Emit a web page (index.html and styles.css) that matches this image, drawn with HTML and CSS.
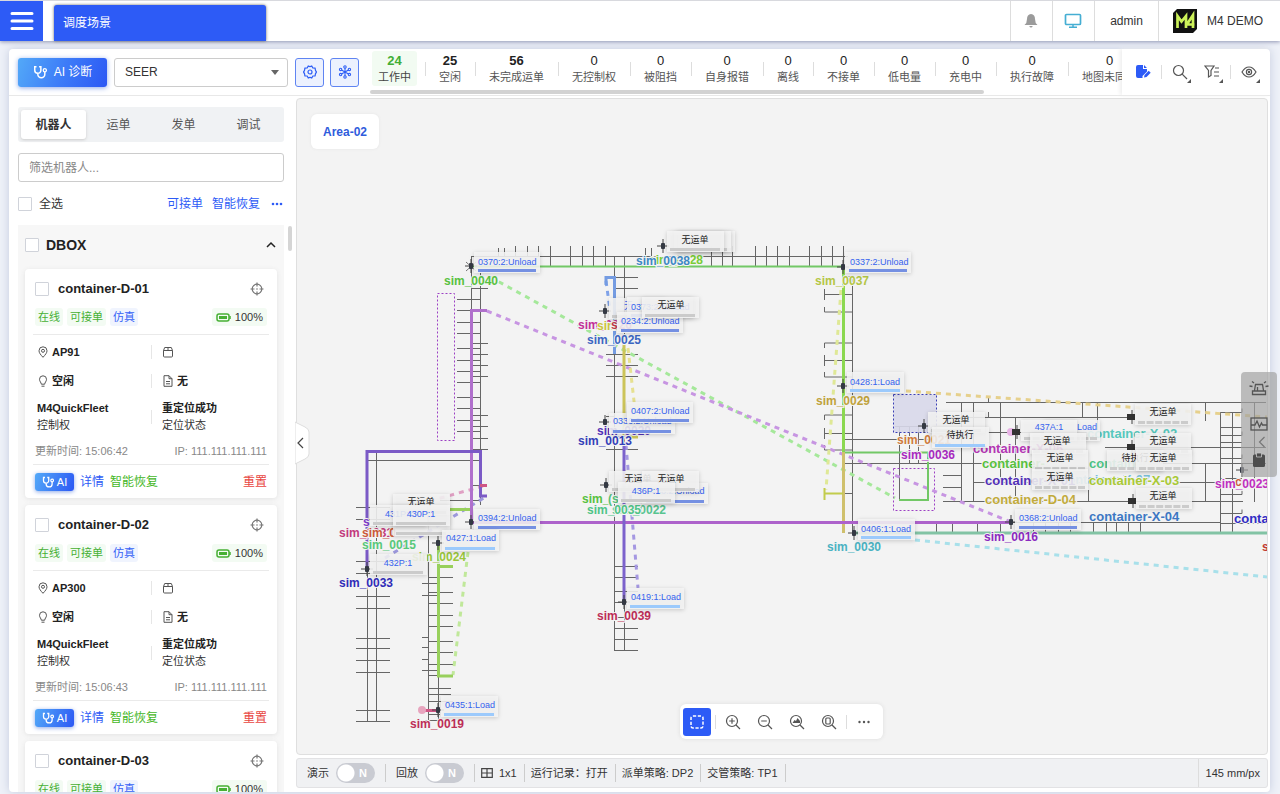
FILE: index.html
```html
<!DOCTYPE html>
<html lang="zh-CN">
<head>
<meta charset="utf-8">
<meta name="viewport" content="width=device-width, initial-scale=1">
<title>调度场景</title>
<link rel="stylesheet" href="styles.css">
</head>
<body>
<svg class="defs" aria-hidden="true">
  <symbol id="steth" viewBox="0 0 16 16"><path d="M4 2H2v4a3.500 3.500 0 0 0 7 0V2H7M5.500 9.500v1a4 4 0 0 0 8 0V8" fill="none" stroke="currentColor" stroke-width="1.700"/><circle cx="13.500" cy="6" r="1.800" fill="none" stroke="currentColor" stroke-width="1.500"/></symbol>
  <symbol id="aim" viewBox="0 0 14 14"><g fill="none" stroke="currentColor" stroke-width="1.200"><circle cx="7" cy="7" r="4.800"/><path d="M7 .5v4M7 9.500v4M.5 7h4M9.500 7h4"/></g><circle cx="7" cy="7" r=".8" fill="currentColor"/></symbol>
  <symbol id="battery" viewBox="0 0 15 9"><rect x="1" y="1" width="12" height="7" rx="2" fill="none" stroke="#47b034" stroke-width="1.500"/><rect x="3" y="3" width="8" height="3" fill="#47b034"/><path d="M14 3v3" stroke="#47b034" stroke-width="1.500"/></symbol>
  <symbol id="pin" viewBox="0 0 12 12"><g fill="none" stroke="currentColor"><path d="M6 11.300C3.600 8.700 2 6.800 2 4.800a4 4 0 0 1 8 0c0 2-1.600 3.900-4 6.500z"/><circle cx="6" cy="4.800" r="1.500"/></g></symbol>
  <symbol id="bulb" viewBox="0 0 12 12"><g fill="none" stroke="currentColor"><path d="M4.300 9.200C4.300 7.500 2.500 6.500 2.500 4.300a3.500 3.500 0 0 1 7 0C9.500 6.500 7.700 7.500 7.700 9.200zM4.500 11.200h3"/></g></symbol>
  <symbol id="box" viewBox="0 0 12 12"><g fill="none" stroke="currentColor"><path d="M1.500 4.500h9V10q0 1-1 1h-7q-1 0-1-1zM1.500 4.500l1.200-3h6.600l1.200 3M6 1.500v3"/></g></symbol>
  <symbol id="doc" viewBox="0 0 12 12"><g fill="none" stroke="currentColor"><path d="M2 .7h5l3 3v7.600H2zM7 .7v3h3M4 6.500h4M4 8.800h4"/></g></symbol>
  <symbol id="bot" viewBox="-7 -7 14 14"><path d="M-6 0H6M0-7V7" stroke="#444" stroke-width="1"/><rect x="-2" y="-3" width="4" height="6" rx="1" fill="#353a44"/></symbol>
  <symbol id="cart" viewBox="-7 -7 14 14"><path d="M1-7V7" stroke="#444" stroke-width="1"/><rect x="-4" y="-3" width="8" height="6" fill="#333"/></symbol>
  <g id="t-unload"><rect class="tag" width="66" height="21"/><rect x="4" y="17" width="58" height="3" fill="#7590e2"/></g>
  <g id="t-load"><rect class="tag" width="57" height="21"/><rect x="3" y="17" width="50" height="3" fill="#9ccafc"/></g>
  <g id="t-idle"><rect class="tag" width="57" height="21"/><rect x="3" y="17" width="50" height="3" fill="#cbcbcb"/></g>
  <g id="t-seg"><rect class="tag" width="56" height="21"/><path d="M3 18.500h50" stroke="#cbcbcb" stroke-width="3" stroke-dasharray="7 1.600"/></g>
</svg>

<header class="topbar">
  <button class="menu" aria-label="菜单"><svg width="24" height="22" viewBox="0 0 24 22"><path d="M2 3.500h20M2 11h20M2 18.500h20" stroke="#fff" stroke-width="3" stroke-linecap="round"/></svg></button>
  <a class="page-tab" href="#">调度场景</a>
  <div class="top-right">
    <button class="top-cell" aria-label="通知"><svg width="14" height="16" viewBox="0 0 14 16"><path d="M7 1q4 .5 4 5 0 4 2.500 6H.5Q3 10 3 6q0-4.500 4-5zM5.300 13h3.400q-.4 1.500-1.700 1.500T5.300 13z" fill="#9b9b9b"/></svg></button>
    <button class="top-cell" aria-label="屏幕"><svg width="18" height="16" viewBox="0 0 18 16"><rect x="1.500" y="1.500" width="15" height="10" rx="1" fill="none" stroke="#45aed3" stroke-width="1.700"/><path d="M9 12v2M5 14.300h8" stroke="#45aed3" stroke-width="1.500"/></svg></button>
    <span class="top-cell user">admin</span>
    <span class="top-cell brand"><svg width="26" height="26" viewBox="0 0 26 26"><path d="M5 1h20v20l-4 4H1V5z" fill="#111"/><path d="M5.500 20V8l4 5.500L14 8v12M14.500 17L21 7v13M14 16.500h8.500" fill="none" stroke="#cdf25a" stroke-width="2.700"/></svg>M4 DEMO</span>
  </div>
</header>

<main class="panel">
  <div class="toolbar">
    <button class="ai-btn"><svg width="14" height="14"><use href="#steth"/></svg>AI 诊断</button>
    <div class="select-wrap"><select class="select" aria-label="场景"><option>SEER</option></select></div>
    <button class="sq" aria-label="设置"><svg width="14" height="14" viewBox="0 0 14 14" fill="none" stroke="#2f5ff5" stroke-width="1.200"><path d="M5.200 1q1.800 1.200 3.600 0l1 2 2.400.2q-.2 2 1.300 3.800-1.500 1.800-1.300 3.800l-2.400.2-1 2q-1.800-1.200-3.600 0l-1-2-2.400-.2Q2 8.800.5 7 2 5.200 1.800 3.200L4.200 3z" stroke-linejoin="round"/><circle cx="7" cy="7" r="2"/></svg></button>
    <button class="sq" aria-label="节点"><svg width="14" height="14" viewBox="0 0 14 14" fill="none" stroke="#2f5ff5" stroke-width="1.100"><path d="M7 3v8M3.500 5L10.500 9M10.500 5L3.500 9"/><circle cx="7" cy="2" r="1.200"/><circle cx="7" cy="12" r="1.200"/><circle cx="2.600" cy="4.400" r="1.200"/><circle cx="11.400" cy="4.400" r="1.200"/><circle cx="2.600" cy="9.600" r="1.200"/><circle cx="11.400" cy="9.600" r="1.200"/></svg></button>
    <div class="stats">
      <div class="stat-row">
        <div class="stat on"><b>24</b><span>工作中</span></div>
        <div class="stat"><b>25</b><span>空闲</span></div>
        <div class="stat"><b>56</b><span>未完成运单</span></div>
        <div class="stat"><i>0</i><span>无控制权</span></div>
        <div class="stat"><i>0</i><span>被阻挡</span></div>
        <div class="stat"><i>0</i><span>自身报错</span></div>
        <div class="stat"><i>0</i><span>离线</span></div>
        <div class="stat"><i>0</i><span>不接单</span></div>
        <div class="stat"><i>0</i><span>低电量</span></div>
        <div class="stat"><i>0</i><span>充电中</span></div>
        <div class="stat"><i>0</i><span>执行故障</span></div>
        <div class="stat"><i>0</i><span>地图未同步</span></div>
      </div>
      <div class="hscroll"></div>
    </div>
    <div class="tools">
      <button class="tool" aria-label="编辑"><svg width="16" height="16" viewBox="0 0 16 16"><path d="M1 3q0-2 2-2h5v4h4v2.500L7.500 12v2H3q-2 0-2-2zM9 1l3 3H9z" fill="#2d5bf6"/><path d="M9 13.500l.5-2.500 4.200-4.200 2 2-4.200 4.200z" fill="#2d5bf6"/></svg></button>
      <span class="vsep"></span>
      <button class="tool more" aria-label="搜索"><svg width="16" height="16" viewBox="0 0 16 16" fill="none" stroke="#555" stroke-width="1.200"><circle cx="6.500" cy="6.500" r="5"/><path d="M10.200 10.200L15 15"/></svg></button>
      <button class="tool more" aria-label="筛选"><svg width="16" height="16" viewBox="0 0 16 16" fill="none" stroke="#555" stroke-width="1.200"><path d="M1 2h9L7 6.500v5L4.500 13V6.500zM11 4h4M10 8h5M10 12h5"/></svg></button>
      <span class="vsep"></span>
      <button class="tool more" aria-label="显示"><svg width="16" height="16" viewBox="0 0 16 16" fill="none" stroke="#555" stroke-width="1.200"><path d="M1 8q3-5 7-5t7 5q-3 5-7 5T1 8z"/><circle cx="8" cy="8" r="2.600"/><circle cx="8" cy="8" r=".6"/></svg></button>
    </div>
  </div>

  <div class="work">
    <aside class="side">
      <nav class="seg">
        <button class="seg-item cur">机器人</button><button class="seg-item">运单</button><button class="seg-item">发单</button><button class="seg-item">调试</button>
      </nav>
      <input class="filter" type="text" placeholder="筛选机器人..." aria-label="筛选机器人">
      <div class="all-row">
        <label class="chk-label"><input class="chk" type="checkbox">全选</label>
        <span class="links"><a href="#">可接单</a><a href="#">智能恢复</a><a class="dots" href="#" aria-label="更多"><svg width="12" height="4" viewBox="0 0 12 4" fill="#2d5bf6"><circle cx="2" cy="2" r="1.300"/><circle cx="6" cy="2" r="1.300"/><circle cx="10" cy="2" r="1.300"/></svg></a></span>
      </div>
      <div class="list">
        <section class="group">
          <div class="group-head"><label class="chk-label dbox"><input class="chk" type="checkbox">DBOX</label><svg width="12" height="8" viewBox="0 0 12 8"><path d="M2 6l4-4 4 4" fill="none" stroke="#222" stroke-width="1.500"/></svg></div>
          <article class="card">
            <div class="card-head"><label class="chk-label name"><input class="chk" type="checkbox">container-D-01</label><svg width="14" height="14"><use href="#aim"/></svg></div>
            <div class="chips"><span class="chip">在线</span><span class="chip">可接单</span><span class="chip sim">仿真</span><span class="chip bat"><svg width="15" height="9"><use href="#battery"/></svg>100%</span></div>
            <div class="cells">
              <div class="cell"><svg width="12" height="12"><use href="#pin"/></svg>AP91</div><div class="cell"><svg width="12" height="12"><use href="#box"/></svg></div>
              <div class="cell"><svg width="12" height="12"><use href="#bulb"/></svg>空闲</div><div class="cell"><svg width="12" height="12"><use href="#doc"/></svg>无</div>
              <div class="cell two">M4QuickFleet<span>控制权</span></div><div class="cell two">重定位成功<span>定位状态</span></div>
            </div>
            <div class="meta"><span>更新时间: 15:06:42</span><span>IP: 111.111.111.111</span></div>
            <div class="card-foot"><button class="ai-mini"><svg width="12" height="12"><use href="#steth"/></svg>AI</button><a href="#">详情</a><a class="ok" href="#">智能恢复</a><a class="bad" href="#">重置</a></div>
          </article>
          <article class="card">
            <div class="card-head"><label class="chk-label name"><input class="chk" type="checkbox">container-D-02</label><svg width="14" height="14"><use href="#aim"/></svg></div>
            <div class="chips"><span class="chip">在线</span><span class="chip">可接单</span><span class="chip sim">仿真</span><span class="chip bat"><svg width="15" height="9"><use href="#battery"/></svg>100%</span></div>
            <div class="cells">
              <div class="cell"><svg width="12" height="12"><use href="#pin"/></svg>AP300</div><div class="cell"><svg width="12" height="12"><use href="#box"/></svg></div>
              <div class="cell"><svg width="12" height="12"><use href="#bulb"/></svg>空闲</div><div class="cell"><svg width="12" height="12"><use href="#doc"/></svg>无</div>
              <div class="cell two">M4QuickFleet<span>控制权</span></div><div class="cell two">重定位成功<span>定位状态</span></div>
            </div>
            <div class="meta"><span>更新时间: 15:06:43</span><span>IP: 111.111.111.111</span></div>
            <div class="card-foot"><button class="ai-mini"><svg width="12" height="12"><use href="#steth"/></svg>AI</button><a href="#">详情</a><a class="ok" href="#">智能恢复</a><a class="bad" href="#">重置</a></div>
          </article>
          <article class="card">
            <div class="card-head"><label class="chk-label name"><input class="chk" type="checkbox">container-D-03</label><svg width="14" height="14"><use href="#aim"/></svg></div>
            <div class="chips"><span class="chip">在线</span><span class="chip">可接单</span><span class="chip sim">仿真</span><span class="chip bat"><svg width="15" height="9"><use href="#battery"/></svg>100%</span></div>
          </article>
        </section>
        <div class="vscroll"></div>
      </div>
    </aside>

    <div class="stage">
      <div class="map">
        <svg class="canvas" role="img" aria-label="地图">
          <g transform="translate(-297 -99)">
            <g class="road">
              <path d="M471.500 257V490M480.500 273V505M471 256.500H848M498.500 248v8M504.500 248v8M515.500 246v11M527.500 246v11M538.500 246v11M550.500 246v20M570.500 246v20M582.500 246v20M593.500 246v20M605.500 246v20M645.500 248v8M651.500 248v8M711.500 246v20M722.500 246v20M732.500 246v20M755.500 246v20M766.500 246v20M777.500 246v20M789.500 246v20M809.500 246v20M821.500 246v20M832.500 246v20M843.500 246v20"/>
              <path d="M457 299.500h23M457 310.500h23M457 322.500h23M457 333.500h23M457 348.500h23M457 360.500h23M457 371.500h23M457 382.500h23M457 397.500h23M457 408.500h23M457 420.500h23M457 431.500h23M471 288.500h17M471 343.500h17M471 354.500h17M471 365.500h17M471 376.500h17M471 415.500h17M471 426.500h17M471 438.500h17M471 449.500h17M471 485.500h16M440 500.500h40M367 460.500h113"/>
              <path d="M367.500 452V721M376.500 452V721M356 507.500h34M356 519.500h34M356 561.500h34M356 573.500h34M356 596.500h34M356 608.500h34M356 638.500h34M356 648.500h34M356 660.500h34M356 672.500h34M356 710.500h34M356 721.500h34"/>
              <path d="M428.500 520V721M438.500 540V721M428 577.500h25M428 592.500h25M428 603.500h25M428 615.500h25M428 626.500h25M428 641.500h25M428 652.500h25M428 664.500h25M428 675.500h25M428 688.500h23M428 694.500h23M428 701.500h25M428 714.500h12M422 583.500h16M422 595.500h16M422 637.500h6M422 647.500h6M422 659.500h6M422 670.500h16M422 720.500h16"/>
              <path d="M614.500 257V650M624.500 257V650M614 277.500h24M614 288.500h24M606 354.500h32M606 365.500h32M606 376.500h32M606 416.500h8M606 449.500h32M614 566.500h24M614 577.500h24M614 591.500h24M614 602.500h10M614 617.500h24M614 628.500h24M614 639.500h24M614 650.500h24"/>
              <path d="M852.500 275V532M843 276.500h9M824 294.500h28M824.500 289v11M824.500 307v5h28M824.500 348v-5h28M824 360.500h28M824.500 355v11M824.500 372v5h28M824.500 420v-5h28M824 433.500h28M824.500 428v11M824.500 445v5h28M843 493.500h9M843 439.500h87M843 463.500h157M899.500 426v74M909.500 426v37M918.500 426v37M895 426.500h33"/>
              <path d="M946 402.500h320M946 417.500h185M988 432.500h147M970 447.500h60M1105 447.500h161M960 463.500h60M1100 463.500h166M943 475.500h18M943 487.500h18M943 501.500h300M961.500 402v99M973.500 402v99M973 482.500h247M1000.500 402v80M1082.500 402v15M1097.500 402v30M1015.500 417v84M1088.500 490v11M1205.500 402v19M1205.500 464v38M1220.500 412V532M1232.500 412V532M1254.500 402v100M1220 412.500h22v-4M1220 427.500h22M1220 435.500h22v-4M1220 442.500h22M1220 458.500h22v-4M1220 478.500h22M1220 494.500h22v-4M1220 513.500h22v-4M1220 523.500h46M988.500 398v5M988.500 412v6"/>
              <path d="M1011 522.500h209M936.500 523v9M952.500 523v9M977.500 523v9M1000.500 523v9M1033.500 523v9M1045.500 523v9M1058.500 523v9M1070.500 523v9M1093.500 523v9M1106.500 523v9M1116.500 523v9M1128.500 523v9M1140.500 523v9"/>
            </g>
            <rect x="893.500" y="394.500" width="43" height="38" fill="#d8d8ea" fill-opacity=".9" stroke="#3a3fb5" stroke-dasharray="2 2"/>
            <g fill="none" stroke="#9c40c4" stroke-dasharray="2 2"><path d="M437.500 293.500h17v147h-17zM893.500 468.500h41v42h-41z"/></g>
            <g class="dash">
              <path d="M490 277L895 498" stroke="#a5e89a"/><path d="M487 311L1011 522" stroke="#c795e2"/>
              <path d="M841 290L826 490" stroke="#dfe896"/><path d="M906 391L1267 417" stroke="#e6d08c"/>
              <path d="M915 540L1267 577" stroke="#a8e0ea"/><path d="M468 552L453 675" stroke="#c0e89a"/>
              <path d="M430 501L487 485" stroke="#e0a0c4"/><path d="M385 558L487 496" stroke="#9c98dc"/>
              <path d="M606 281L610 310" stroke="#7fa2e8"/><path d="M628 348L635 410" stroke="#e6e090"/>
              <path d="M626 445L638 588" stroke="#a598e2"/>
            </g>
            <g class="route">
              <path d="M471 266.500H843M928 452v48h-29" stroke="#72c866" stroke-width="2"/>
              <path d="M843.500 266V452" stroke="#8bd850"/><path d="M843 452.500h85" stroke="#72c866" stroke-width="2"/>
              <path d="M843.500 452V533" stroke="#cfc06c"/><path d="M824 493.500h19M824.500 488v12" stroke="#c2cc4c" stroke-width="2"/>
              <path d="M853 533H1267" stroke="#82c3a4"/><path d="M487 310.500H471.500V522" stroke="#b070cc"/>
              <path d="M471 522.500H1011" stroke="#ad62cb"/><path d="M367 570V451.500H480.500V496H487" stroke="#7b5ac6"/>
              <path d="M606 285V277.500H614.500V354" stroke="#759ce2"/><path d="M624 335V437H638" stroke="#ccc45a"/>
              <path d="M624 445V602" stroke="#7c62cc"/><path d="M438.500 540V676H453M438 566.500H453M450 509.500H470" stroke="#98d05c"/>
              <path d="M480 485.500H487M422 710.500H438" stroke="#cf5584"/>
            </g>
            <circle cx="422" cy="710" r="4" fill="#e7a5be"/>
            <circle cx="1011" cy="432" r="4" fill="#e8b3e6"/>
            <path d="M466 262l10 9M466 271l10-9" stroke="#777"/>
            <g>
              <use href="#bot" x="464" y="259" width="14" height="14"/><use href="#bot" x="656" y="239" width="14" height="14"/><use href="#bot" x="598" y="304" width="14" height="14"/><use href="#bot" x="598" y="415" width="14" height="14"/><use href="#bot" x="599" y="478" width="14" height="14"/><use href="#bot" x="617" y="595" width="14" height="14"/><use href="#bot" x="360" y="562" width="14" height="14"/><use href="#bot" x="464" y="515" width="14" height="14"/><use href="#bot" x="431" y="536" width="14" height="14"/><use href="#bot" x="431" y="703" width="14" height="14"/><use href="#bot" x="836" y="260" width="14" height="14"/><use href="#bot" x="836" y="379" width="14" height="14"/><use href="#bot" x="847" y="526" width="14" height="14"/><use href="#bot" x="917" y="419" width="14" height="14"/><use href="#bot" x="1004" y="515" width="14" height="14"/><use href="#bot" x="1235" y="463" width="14" height="14"/>
              <use href="#cart" x="1009" y="425" width="14" height="14"/><use href="#cart" x="1124" y="410" width="14" height="14"/><use href="#cart" x="1124" y="440" width="14" height="14"/><use href="#cart" x="1125" y="494" width="14" height="14"/>
            </g>
            <g class="lbl">
              <text x="444" y="285" fill="#58c140">sim_0040</text>
              <text x="649" y="264" fill="#79cc35">sim_0028</text><text x="636" y="265" fill="#3d88c4">sim_0038</text>
              <text x="578" y="329" fill="#c22f97">sim_0026</text><text x="597" y="330" fill="#cbc53c">sim_</text><text x="611" y="329" fill="#c03a45">s</text><text x="587" y="344" fill="#3c66c2">sim_0025</text>
              <text x="597" y="435" fill="#5230b8">sim_0020</text><text x="578" y="445" fill="#333fb8">sim_0013</text>
              <text x="582" y="503" fill="#58c140">sim_</text><text x="608" y="503" fill="#58c17a">(s</text><text x="612" y="514" fill="#58c490">sim_0022</text><text x="587" y="514" fill="#4fc487">sim_0035</text>
              <text x="597" y="620" fill="#bd2e57">sim_0039</text>
              <text x="363" y="526" fill="#7c3ac9">s</text><text x="339" y="537" fill="#c23a7d">sim_0031</text><text x="362" y="537" fill="#cc5a3a">sim_0</text><text x="362" y="549" fill="#58c87a">sim_0015</text><text x="412" y="561" fill="#9ac63a">sim_0024</text><text x="339" y="587" fill="#302cb8">sim_0033</text>
              <text x="410" y="728" fill="#bd2e57">sim_0019</text>
              <text x="815" y="285" fill="#b4c645">sim_0037</text><text x="816" y="405" fill="#bfa23c">sim_0029</text><text x="827" y="551" fill="#4ab2c2">sim_0030</text>
              <text x="897" y="444" fill="#cf7b3c">sim_0021</text><text x="901" y="459" fill="#a82ac0">sim_0036</text><text x="984" y="541" fill="#8b2ac0">sim_0016</text>
            </g>
            <g class="lbl big">
              <text x="1087" y="438" fill="#56c8bd">container-X-02</text><text x="973" y="453" fill="#b436b4">container-X-06</text><text x="982" y="468" fill="#58c140">container-</text><text x="1089" y="468" fill="#4fc487">container-</text>
              <text x="1060" y="484" fill="#79bed8">container-X-07</text><text x="1089" y="485" fill="#a9c936">container-X-03</text><text x="985" y="485" fill="#5230b8">container-X-01</text><text x="985" y="504" fill="#c2ab3c">container-D-04</text><text x="1089" y="521" fill="#3d78c4">container-X-04</text>
              <text x="1234" y="523" fill="#302cc4">container-D</text>
            </g>
            <g class="lbl"><text x="1235" y="486" fill="#cc5a3a">con</text><text x="1215" y="488" fill="#c030c0">sim_0023</text><text x="1262" y="551" fill="#c03a30">sim_0017</text></g>
            <g class="tags">
              <g><use href="#t-unload" x="474" y="252"/><text x="478" y="265">0370:2:Unload</text></g>
              <g><use href="#t-idle" x="678" y="231"/><use href="#t-idle" x="674" y="231"/><use href="#t-idle" x="667" y="231"/><text class="cn" x="695" y="243">无运单</text></g>
              <g><use href="#t-unload" x="845" y="252"/><text x="850" y="265">0337:2:Unload</text></g>
              <g><use href="#t-load" x="847" y="372"/><text x="850" y="385">0428:1:Load</text></g>
              <g><use href="#t-load" x="858" y="519"/><text x="861" y="532">0406:1:Load</text></g>
              <g><use href="#t-idle" x="609" y="298"/><text x="624" y="309">无</text><use href="#t-unload" x="627" y="297"/><text x="631" y="310">0373:2:Unload</text><use href="#t-unload" x="617" y="312"/><text x="621" y="324">0234:2:Unload</text><use href="#t-idle" x="642" y="297"/><text class="cn" x="671" y="308">无运单</text></g>
              <g><use href="#t-unload" x="609" y="413"/><text x="613" y="424">0336:2:Unload</text><use href="#t-unload" x="627" y="402"/><text x="631" y="414">0407:2:Unload</text></g>
              <g><use href="#t-idle" x="609" y="471"/><text class="cn" x="638" y="482">无运单</text><use href="#t-unload" x="642" y="483"/><text x="646" y="494">0408:2:Unload</text><use href="#t-idle" x="642" y="471"/><text class="cn" x="671" y="482">无运单</text><use href="#t-idle" x="618" y="482"/><text class="mid" x="646" y="494">436P:1</text></g>
              <g><use href="#t-load" x="627" y="588"/><text x="631" y="600">0419:1:Load</text></g>
              <g><use href="#t-idle" x="393" y="515"/><use href="#t-idle" x="393" y="494"/><text class="cn" x="421" y="505">无运单</text><use href="#t-idle" x="370" y="505"/><text x="385" y="517">431P:1</text><use href="#t-idle" x="393" y="505"/><text class="mid" x="421" y="517">430P:1</text></g>
              <g><use href="#t-idle" x="370" y="554"/><text class="mid" x="398" y="566">432P:1</text></g>
              <g><use href="#t-unload" x="474" y="509"/><text x="478" y="521">0394:2:Unload</text></g>
              <g><use href="#t-load" x="442" y="530"/><text x="446" y="541">0427:1:Load</text></g>
              <g><use href="#t-load" x="441" y="696"/><text x="445" y="708">0435:1:Load</text></g>
              <g><use href="#t-idle" x="928" y="412"/><text class="cn" x="956" y="423">无运单</text><use href="#t-load" x="932" y="427"/><text class="cn" x="960" y="438">待执行</text></g>
              <g><use href="#t-seg" x="1044" y="420"/><text x="1077" y="430">Load</text><use href="#t-seg" x="1021" y="420"/><text class="mid" x="1049" y="430">437A:1</text></g>
              <g><use href="#t-seg" x="1030" y="433"/><text class="cn" x="1057" y="444">无运单</text><use href="#t-seg" x="1032" y="450"/><text class="cn" x="1060" y="461">无运单</text><use href="#t-seg" x="1032" y="469"/><text class="cn" x="1060" y="480">无运单</text></g>
              <g><use href="#t-seg" x="1135" y="404"/><text class="cn" x="1163" y="415">无运单</text><use href="#t-seg" x="1135" y="433"/><text class="cn" x="1163" y="444">无运单</text><use href="#t-seg" x="1107" y="450"/><text class="cn" x="1135" y="461">待执行</text><use href="#t-seg" x="1136" y="450"/><text class="cn" x="1163" y="461">无运单</text><use href="#t-seg" x="1136" y="488"/><text class="cn" x="1163" y="499">无运单</text></g>
              <g><use href="#t-unload" x="1015" y="509"/><text x="1019" y="521">0368:2:Unload</text></g>
            </g>
          </g>
        </svg>
        <button class="area">Area-02</button>
        <button class="fold" aria-label="收起"><svg width="16" height="44" viewBox="0 0 16 44"><path d="M0 1L10 6q4 2 4 5v22q0 3-4 5L0 43z" fill="#fff" stroke="#ddd"/><path d="M8 17l-5 5 5 5" fill="none" stroke="#444" stroke-width="1.200"/></svg></button>
        <div class="zoombar">
          <button class="zb act" aria-label="框选"><svg width="14" height="14" viewBox="0 0 14 14"><rect x="1" y="1" width="12" height="12" rx="2" fill="none" stroke="#fff" stroke-width="1.500" stroke-dasharray="3.200 1.600"/></svg></button>
          <span class="vsep"></span>
          <button class="zb" aria-label="放大"><svg width="16" height="16" viewBox="0 0 16 16"><g fill="none" stroke="#555" stroke-width="1.200"><circle cx="7" cy="7" r="5.500"/><path d="M11 11l4 4M7 4.200v5.600M4.200 7h5.600"/></g></svg></button>
          <button class="zb" aria-label="缩小"><svg width="16" height="16" viewBox="0 0 16 16"><g fill="none" stroke="#555" stroke-width="1.200"><circle cx="7" cy="7" r="5.500"/><path d="M11 11l4 4M4.200 7h5.600"/></g></svg></button>
          <button class="zb" aria-label="适应"><svg width="16" height="16" viewBox="0 0 16 16"><g fill="none" stroke="#555" stroke-width="1.200"><circle cx="7" cy="7" r="5.500"/><path d="M11 11l4 4"/></g><path d="M3.500 9l2-3 1.500 1 1.500-3 2.500 3v2z" fill="#555"/></svg></button>
          <button class="zb" aria-label="原始大小"><svg width="16" height="16" viewBox="0 0 16 16"><g fill="none" stroke="#555" stroke-width="1.200"><circle cx="7" cy="7" r="5.500"/><path d="M11 11l4 4"/><rect x="4.800" y="4" width="4.400" height="6" rx="1"/></g></svg></button>
          <span class="vsep"></span>
          <button class="zb" aria-label="更多"><svg width="14" height="4" viewBox="0 0 14 4" fill="#555"><circle cx="2.500" cy="2" r="1.200"/><circle cx="7" cy="2" r="1.200"/><circle cx="11.500" cy="2" r="1.200"/></svg></button>
        </div>
        <div class="dock">
          <button class="dk" aria-label="报警"><svg width="20" height="16" viewBox="0 0 20 16"><g fill="none" stroke="#555" stroke-width="1.300"><path d="M5.500 10.500l1-6h7l1 6M3.500 11h13v3.500h-13zM.5 6l3 .5M19.500 6l-3 .5M3 1.500l2 1.500M17 1.500L15 3M8.500 10.500V7"/></g></svg></button>
          <button class="dk" aria-label="监控"><svg width="18" height="14" viewBox="0 0 18 14"><g fill="none" stroke="#555" stroke-width="1.300"><rect x="1" y="1" width="16" height="12"/><path d="M1 8h4l2-4 2.500 6 2-4 1 2H17"/></g></svg></button>
          <button class="dk low" aria-label="展开"><svg width="14" height="12" viewBox="0 0 14 12"><path d="M12.500 1L7.500 6l5 5" fill="none" stroke="#777" stroke-width="1.200"/></svg></button>
          <button class="dk low" aria-label="任务"><svg width="14" height="16" viewBox="0 0 14 16"><path d="M1 4q0-1.500 1.500-1.500h9Q13 2.500 13 4v9.500q0 1.500-1.500 1.500h-9Q1 15 1 13.500z" fill="#4d4d4d"/><path d="M4.500 1h5v4h-5z" fill="#4d4d4d" stroke="#c4c4c4" stroke-width=".8"/></svg></button>
        </div>
      </div>
      <footer class="status">
        <label class="st tog"><span>演示</span><input class="sw" type="checkbox" role="switch"><span class="n">N</span></label>
        <label class="st tog"><span>回放</span><input class="sw" type="checkbox" role="switch"><span class="n">N</span></label>
        <span class="st"><svg width="12" height="10" viewBox="0 0 12 10"><path d="M.7.7h10.600v8.600H.7zM6 .7v8.600M.7 5h10.600" fill="none" stroke="#444" stroke-width="1.200"/></svg>1x1</span>
        <span class="st">运行记录：打开</span>
        <span class="st">派单策略: DP2</span>
        <span class="st">交管策略: TP1</span>
        <span class="scale">145 mm/px</span>
      </footer>
    </div>
  </div>
</main>
</body>
</html>
```
FILE: styles.css
```css
* { box-sizing: border-box; }
body {
  margin: 0; height: 100vh; display: flex; flex-direction: column; overflow: hidden;
  font: 12px/16px "Liberation Sans", "Noto Sans CJK SC", sans-serif;
  color: #333; background: #eef1f8;
}
button, input, select { font: inherit; color: inherit; margin: 0; padding: 0; border: 0; background: none; }
button { display: flex; align-items: center; justify-content: center; white-space: nowrap; }
a { text-decoration: none; color: #2d5bf6; }
svg { display: block; flex: none; }
.defs { position: absolute; width: 0; height: 0; }

.topbar {
  flex: none; display: flex; height: 41px; background: #fff; position: relative;
  border-top: 1px solid #d8d9de; box-shadow: 0 1px 4px #8e94b3;
}
.menu { width: 43px; background: #2d5bf6; }
.page-tab {
  width: 212px; margin: 4px 0 0 11px; padding: 0 9px; display: flex; align-items: center;
  background: #2d5bf6; color: #fff; border-radius: 3px 3px 0 0; box-shadow: 0 0 3px #666;
}
.top-right { margin-left: auto; display: flex; }
.top-cell { display: flex; align-items: center; width: 42px; border-left: 1px solid #ddd; }
.user { width: 64px; justify-content: center; }
.brand { width: auto; padding: 0 17px 0 13px; gap: 9px; }

.panel {
  flex: 1; min-height: 0; margin: 8px 10px 2px 9px; display: flex; flex-direction: column;
  background: #fff; border-radius: 4px; box-shadow: 0 0 10px #c3cade;
}
.toolbar { flex: none; height: 47px; display: flex; align-items: center; padding-left: 9px; border-bottom: 1px solid #e8e8e8; }
.ai-btn {
  width: 89px; height: 29px; gap: 7px; color: #fff; border-radius: 3px;
  background: linear-gradient(110deg, #53a9f8, #3d7cf8 50%, #2c58f4); box-shadow: 0 1px 5px #8ea9e8;
}
.select-wrap { position: relative; width: 174px; margin: 0 7px; }
.select-wrap::after {
  content: ""; position: absolute; right: 9px; top: 12px;
  border: 4px solid transparent; border-top: 5px solid #666; border-bottom: 0;
}
.select { width: 100%; height: 29px; padding: 0 10px; appearance: none; border: 1px solid #ccc; border-radius: 3px; background: #fff; }
.sq { width: 29px; height: 29px; margin-right: 6px; border: 1px solid #5f84f2; border-radius: 3px; background: #ecf1fe; }
.stats { flex: 1; min-width: 0; align-self: stretch; overflow: hidden; margin-left: 5px; }
.stat-row { display: flex; padding: 2px 0 0 2px; }
.stat {
  flex: none; position: relative; padding: 2px 6px 0; height: 35px; margin-right: 16px;
  display: flex; flex-direction: column; align-items: center; border-radius: 3px;
}
.stat::after { content: ""; position: absolute; right: -9px; top: 11px; width: 1px; height: 14px; background: #ddd; }
.stat b, .stat i { font-size: 13px; font-style: normal; line-height: 16px; color: #222; }
.stat span { font-size: 11px; color: #555; line-height: 16px; }
.stat.on { background: #f2fbf2; }
.stat.on b { color: #41ae36; }
.stat.on span { color: #444; }
.hscroll { width: 614px; height: 4px; margin: 4px 0 0; background: #d2d2d2; border-radius: 2px; }
.tools { display: flex; align-items: center; align-self: stretch; padding: 0 5px 0 5px; box-shadow: -2px 0 4px #eee; }
.tool { position: relative; width: 18px; height: 24px; margin: 0 7px; }
.tool.more::after {
  content: ""; position: absolute; right: -2px; bottom: 1px;
  border-left: 4px solid transparent; border-bottom: 4px solid #555;
}
.vsep { width: 1px; height: 14px; background: #ddd; margin: 0 2px; }

.work { flex: 1; min-height: 0; display: flex; padding-right: 2px; }
.side { flex: none; width: 287px; padding: 11px 0 0 9px; display: flex; flex-direction: column; }
.seg { flex: none; display: flex; width: 266px; height: 35px; padding: 3px; background: #f0f2f4; border-radius: 3px; }
.seg-item { flex: 1; border-radius: 3px; color: #555; }
.seg-item.cur { background: #fff; color: #333; font-weight: bold; box-shadow: 0 1px 3px #ccc; }
.filter { flex: none; width: 266px; height: 29px; margin-top: 11px; padding: 0 10px; border: 1px solid #ccc; border-radius: 3px; }
.filter::placeholder { color: #888; }
.all-row { flex: none; display: flex; justify-content: space-between; align-items: center; width: 266px; height: 43px; }
.chk-label { display: flex; align-items: center; gap: 7px; }
.chk { width: 14px; height: 14px; appearance: none; border: 1px solid #d0d3da; border-radius: 1px; background: #fff; }
.links { display: flex; gap: 9px; align-items: center; }
.dots { display: block; padding: 0 1px 0 2px; }
.list { flex: 1; min-height: 0; display: flex; gap: 4px; overflow: hidden; }
.group { width: 266px; padding: 0 7px; background: #f7f7f7; }
.vscroll { width: 4px; height: 25px; margin-top: 1px; background: #d5d5d5; border-radius: 2px; }
.group-head { display: flex; align-items: center; justify-content: space-between; height: 40px; }
.dbox { font-size: 14px; font-weight: bold; color: #222; }
.card { margin: 4px 0 7px; padding: 11px 8px 0; background: #fff; border-radius: 4px; box-shadow: 0 1px 5px #e2e2e2; }
.card + .card { margin-top: 7px; }
.card-head, .chips, .meta { margin: 0 2px; display: flex; align-items: center; justify-content: space-between; }
.card-head { height: 18px; color: #777; padding-right: 3px; }
.name { font-size: 13px; font-weight: bold; color: #222; gap: 9px; }
.chips { justify-content: flex-start; gap: 4px; margin-top: 10px; }
.chip { height: 18px; padding: 0 3px; font-size: 11px; line-height: 18px; border-radius: 3px; color: #46b033; background: #f3fbf3; }
.chip.sim { color: #3562f6; background: #f0f4fe; }
.chip.bat { display: flex; align-items: center; gap: 4px; margin-left: auto; padding: 0 4px; color: #333; }
.cells {
  margin-top: 8px; padding: 7px 2px 0; border-top: 1px solid #eaeaea;
  display: grid; grid-template-columns: 1fr 1fr; row-gap: 9px; font-size: 11px; font-weight: bold; color: #222;
}
.cell { position: relative; display: flex; align-items: center; gap: 3px; height: 20px; padding-left: 2px; }
.cell:nth-child(even) { padding-left: 11px; }
.cell:nth-child(even)::before { content: ""; position: absolute; left: 0; width: 1px; height: 14px; background: #e6e6e6; }
.cell svg { color: #555; }
.cell.two { flex-direction: column; align-items: flex-start; justify-content: center; gap: 0; height: 34px; line-height: 17px; }
.cell.two span { font-weight: normal; color: #333; }
.meta { margin-top: 8px; height: 17px; font-size: 11px; color: #888; }
.card-foot { display: flex; align-items: center; gap: 6px; height: 34px; margin-top: 5px; padding: 0 2px; border-top: 1px solid #eaeaea; }
.ai-mini { width: 39px; height: 18px; gap: 3px; font-size: 11px; color: #fff; border-radius: 3px; background: linear-gradient(110deg, #53a9f8, #2c58f4); box-shadow: 0 1px 4px #8ea9e8; }
.ok { color: #46b71f; }
.bad { color: #e8463f; margin-left: auto; }

.stage { flex: 1; min-width: 0; display: flex; flex-direction: column; padding: 2px 0 4px; }
.map { flex: 1; min-height: 0; position: relative; background: #f3f3f3; border: 1px solid #dfdfdf; border-radius: 4px; }
.canvas { width: 100%; height: 100%; overflow: hidden; }
.area { position: absolute; left: 14px; top: 15px; width: 68px; height: 35px; border-radius: 6px; background: #fff; color: #2f5cdc; font-weight: bold; box-shadow: 0 0 3px #e4e4e4; }
.fold { position: absolute; left: -2px; top: 322px; }
.dock { position: absolute; right: -10px; top: 273px; width: 36px; padding: 6px 0 8px; display: flex; flex-direction: column; background: rgba(160, 160, 160, .68); border-radius: 4px; }
.dk { height: 19px; }
.dk:first-child { margin-bottom: 17px; }
.dk.low { height: 18px; }
.zoombar { position: absolute; left: 383px; bottom: 15px; height: 35px; padding: 3px; display: flex; align-items: center; background: #fff; border-radius: 6px; box-shadow: 0 0 4px #ddd; }
.zoombar .vsep { margin: 0 1px; }
.zb { width: 28px; height: 28px; margin: 0 2px; border-radius: 3px; }
.zb.act { background: #2d5bf6; margin: 0 3px 0 0; }

.road { fill: none; stroke: #666; stroke-width: 1; }
.route { fill: none; stroke-width: 3; }
.dash { fill: none; stroke-width: 3; stroke-dasharray: 5 5; }
.lbl text { font-size: 12px; font-weight: bold; stroke: #f3f3f3; stroke-width: 2px; paint-order: stroke; }
.lbl.big text { font-size: 13px; }
.tags text { font-size: 9px; fill: #3562ee; }
.tags text.cn { fill: #222; text-anchor: middle; }
.tags text.mid { text-anchor: middle; }
.tag { fill: #f4f4f4; fill-opacity: .88; filter: drop-shadow(0 1px 2px rgba(0, 0, 0, .2)); }

.status { flex: none; display: flex; height: 30px; margin-top: 3px; padding-left: 3px; align-items: center; font-size: 11px; background: #f0f1f3; border: 1px solid #e2e2e4; border-radius: 3px; }
.st { position: relative; display: flex; align-items: center; gap: 6px; height: 18px; padding: 0 7px 0 6px; border-right: 1px solid #ccc; }
.tog { padding: 0 10px; gap: 7px; }
.tog:first-child { padding-left: 7px; }
.sw { width: 39px; height: 20px; appearance: none; border-radius: 10px; background: radial-gradient(circle at 10px 10px, #fff 8px, #c9cbd2 9px); }
.n { position: absolute; right: 18px; color: #fff; font-weight: bold; }
.scale { margin-left: auto; padding: 0 7px; line-height: 28px; border-left: 1px solid #ddd; }
```
